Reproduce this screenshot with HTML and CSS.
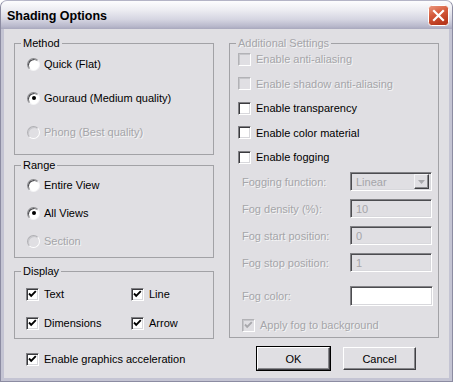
FILE: index.html
```html
<!DOCTYPE html>
<html lang="en">
<head>
    <meta charset="UTF-8">
    <title>Shading Options</title>
    <link rel="stylesheet" href="styles.css">
</head>
<body>
    <div class="window">
        <div class="titlebar">
            <span class="title">Shading Options</span>
            <button class="close-btn" title="Close">
                <svg width="21" height="21" viewBox="0 0 21 21">
                    <defs>
                        <linearGradient id="closeGrad" x1="0" y1="0" x2="0.4" y2="1">
                            <stop offset="0" stop-color="#eb9a80"/>
                            <stop offset="0.5" stop-color="#d55a3b"/>
                            <stop offset="1" stop-color="#b8371c"/>
                        </linearGradient>
                    </defs>
                    <rect x="0.5" y="0.5" width="20" height="20" rx="3" fill="url(#closeGrad)" stroke="#fff"/>
                    <path d="M6 6 L15 15 M15 6 L6 15" stroke="#fff" stroke-width="2.2" stroke-linecap="square"/>
                </svg>
            </button>
        </div>

        <div class="dialog">
            <div class="col-left">
                <fieldset class="group group-method">
                    <legend>Method</legend>
                    <div class="group-body">
                        <label class="opt"><span class="radio"></span>Quick (Flat)</label>
                        <label class="opt"><span class="radio is-checked"></span>Gouraud (Medium quality)</label>
                        <label class="opt is-disabled"><span class="radio"></span>Phong (Best quality)</label>
                    </div>
                </fieldset>

                <fieldset class="group group-range">
                    <legend>Range</legend>
                    <div class="group-body">
                        <label class="opt"><span class="radio"></span>Entire View</label>
                        <label class="opt"><span class="radio is-checked"></span>All Views</label>
                        <label class="opt is-disabled"><span class="radio"></span>Section</label>
                    </div>
                </fieldset>

                <fieldset class="group group-display">
                    <legend>Display</legend>
                    <div class="group-body">
                        <label class="opt"><span class="check is-checked"><svg viewBox="0 0 11 11"><path d="M2 4.5 L4.2 6.8 L8.8 2.2"/></svg></span>Text</label>
                        <label class="opt"><span class="check is-checked"><svg viewBox="0 0 11 11"><path d="M2 4.5 L4.2 6.8 L8.8 2.2"/></svg></span>Line</label>
                        <label class="opt"><span class="check is-checked"><svg viewBox="0 0 11 11"><path d="M2 4.5 L4.2 6.8 L8.8 2.2"/></svg></span>Dimensions</label>
                        <label class="opt"><span class="check is-checked"><svg viewBox="0 0 11 11"><path d="M2 4.5 L4.2 6.8 L8.8 2.2"/></svg></span>Arrow</label>
                    </div>
                </fieldset>

                <label class="opt accel"><span class="check is-checked"><svg viewBox="0 0 11 11"><path d="M2 4.5 L4.2 6.8 L8.8 2.2"/></svg></span>Enable graphics acceleration</label>
            </div>

            <div class="col-right">
                <fieldset class="group group-extra is-disabled">
                    <legend>Additional Settings</legend>
                    <div class="group-body">
                        <div class="check-list">
                            <label class="opt is-disabled"><span class="check"></span>Enable anti-aliasing</label>
                            <label class="opt is-disabled"><span class="check"></span>Enable shadow anti-aliasing</label>
                            <label class="opt"><span class="check"></span>Enable transparency</label>
                            <label class="opt"><span class="check"></span>Enable color material</label>
                            <label class="opt"><span class="check"></span>Enable fogging</label>
                        </div>

                        <div class="fog-list">
                            <div class="field">
                                <span class="field-label">Fogging function:</span>
                                <div class="select">
                                    <span class="select-value">Linear</span>
                                    <span class="select-arrow"><svg width="7" height="4" viewBox="0 0 7 4"><path d="M0 0 H7 L3.5 4 Z" fill="#a8a8ac"/></svg></span>
                                </div>
                            </div>
                            <div class="field">
                                <span class="field-label">Fog density (%):</span>
                                <input class="text-input" type="text" value="10" disabled>
                            </div>
                            <div class="field">
                                <span class="field-label">Fog start position:</span>
                                <input class="text-input" type="text" value="0" disabled>
                            </div>
                            <div class="field">
                                <span class="field-label">Fog stop position:</span>
                                <input class="text-input" type="text" value="1" disabled>
                            </div>
                        </div>

                        <div class="field field-color">
                            <span class="field-label">Fog color:</span>
                            <span class="color-swatch"></span>
                        </div>

                        <label class="opt is-disabled fog-bg"><span class="check is-checked"><svg viewBox="0 0 11 11"><path d="M2 4.5 L4.2 6.8 L8.8 2.2"/></svg></span>Apply fog to background</label>
                    </div>
                </fieldset>

                <div class="buttons">
                    <button class="btn btn-default">OK</button>
                    <button class="btn">Cancel</button>
                </div>
            </div>
        </div>
    </div>
</body>
</html>
```

FILE: styles.css
```css
* { margin: 0; padding: 0; box-sizing: border-box; }
body { font-family: "Liberation Sans", Arial, sans-serif; font-size: 11px; color: #000; background: #fff; }

/* window frame */
.window { width: 453px; height: 382px; display: flex; flex-direction: column; background: #c4c4d3; border: 1px solid #8c8ca2; border-top-color: #b4b4c6; border-radius: 7px 7px 0 0; overflow: hidden; }
.titlebar { height: 28px; flex: none; display: flex; align-items: center; justify-content: space-between; padding: 0 3px 0 6px; background: linear-gradient(#fdfdfe 0%, #eeeef3 30%, #d6d6e2 65%, #b9b9cc 90%, #a8a8bd 100%); }
.title { font-size: 12.5px; font-weight: bold; color: #000; padding-top: 1px; }
.close-btn { width: 21px; height: 21px; border: none; background: none; display: block; margin-top: 1px; }
.close-btn svg { display: block; }

/* dialog body */
.dialog { flex: 1; margin: 0 3px 3px; background: #e0dfe3; display: grid; grid-template-columns: 200px 210px; column-gap: 15px; padding: 8px 0 0 10px; align-items: start; }
.col-left, .col-right { display: flex; flex-direction: column; }

/* group boxes */
.group { border: 1px solid #a2a2a6; min-width: 0; padding: 0; }
.group legend { margin-left: 6px; padding: 0 2px; line-height: 13px; font-size: 11px; }
.group.is-disabled legend { color: #a5a5a9; text-shadow: 1px 1px 0 rgba(255,255,255,0.7); }

.group-method .group-body { display: flex; flex-direction: column; gap: 14px; padding: 4px 0 12px 12px; }
.group-range { margin-top: 4px; }
.group-range .group-body { display: flex; flex-direction: column; gap: 8px; padding: 3px 0 6px 12px; }
.group-display { margin-top: 7px; }
.group-display .group-body { display: grid; grid-template-columns: 105px 1fr; row-gap: 9px; padding: 6px 0 5px 11px; }
.accel { margin-top: 10px; padding-left: 12px; }

/* options */
.opt { display: flex; align-items: center; gap: 5px; height: 20px; white-space: nowrap; }
.opt.is-disabled { color: #a5a5a9; text-shadow: 1px 1px 0 rgba(255,255,255,0.7); }

.radio { width: 13px; height: 13px; flex: none; border-radius: 50%; background: #fff; border: 1px solid; border-color: #8a8a8e #f4f4f6 #f4f4f6 #8a8a8e; box-shadow: inset 1px 1px 0 #4a4a4e; display: flex; align-items: center; justify-content: center; margin-right: -1px; }
.radio.is-checked::after { content: ""; width: 4px; height: 4px; border-radius: 50%; background: #000; }
.opt.is-disabled .radio { background: #e0dfe3; border-color: #b0b0b4 #fff #fff #b0b0b4; box-shadow: inset 1px 1px 0 #c8c8cc; }

.check { width: 13px; height: 13px; flex: none; background: #fff; border: 1px solid; border-color: #808084 #fff #fff #808084; box-shadow: inset 1px 1px 0 #3a3a3e, inset -1px -1px 0 #d8d8dc; display: flex; align-items: center; justify-content: center; }
.check svg { width: 11px; height: 11px; display: block; }
.check path { fill: none; stroke: #000; stroke-width: 1.9; }
.opt.is-disabled .check { background: #e0dfe3; border-color: #b2b2b6 #fff #fff #b2b2b6; box-shadow: inset 1px 1px 0 #c6c6ca; }
.opt.is-disabled .check path { stroke: #a8a8ac; }

/* additional settings */
.group-extra .group-body { padding: 0 0 3px 8px; }
.check-list { display: flex; flex-direction: column; gap: 6.5px; }
.check-list .opt { height: 18px; }
.fog-list { display: flex; flex-direction: column; gap: 8px; margin-top: 6px; }
.field { display: grid; grid-template-columns: 108px 83px; align-items: center; height: 19px; padding-left: 4px; }
.field-label { color: #a5a5a9; text-shadow: 1px 1px 0 rgba(255,255,255,0.7); white-space: nowrap; }
.field-color { margin-top: 14px; height: 20px; }
.fog-bg { margin-top: 10px; height: 18px; padding-left: 4px; }

.select, .text-input, .color-swatch { height: 19px; width: 82px; border: 1px solid; border-color: #828286 #fff #fff #828286; box-shadow: inset 1px 1px 0 #4c4c50, inset -1px -1px 0 #d8d8dc; background: #e0dfe3; }
.text-input { font-family: inherit; font-size: 11px; color: #a5a5a9; padding: 0 5px; outline: none; }
.select { display: flex; align-items: center; justify-content: space-between; padding: 2px; }
.select-value { color: #a5a5a9; padding-left: 3px; }
.select-arrow { width: 15px; height: 15px; display: flex; align-items: center; justify-content: center; background: #e0dfe3; border: 1px solid; border-color: #f4f4f6 #404044 #404044 #f4f4f6; box-shadow: inset -1px -1px 0 #8a8a8e; }
.color-swatch { display: block; height: 20px; width: 83px; background: #fff; }

/* buttons */
.buttons { display: flex; gap: 13px; padding-left: 28px; margin-top: 9px; }
.btn { width: 73px; height: 23px; font-family: inherit; font-size: 11px; color: #000; background: #e0dfe3; border: 1px solid; border-color: #fff #404044 #404044 #fff; box-shadow: inset -1px -1px 0 #86868a; cursor: pointer; }
.btn-default { outline: 1px solid #000; outline-offset: 0; border-color: #fff #404044 #404044 #fff; box-shadow: inset -1px -1px 0 #86868a, 0 0 0 1px #000; outline: none; }
```
